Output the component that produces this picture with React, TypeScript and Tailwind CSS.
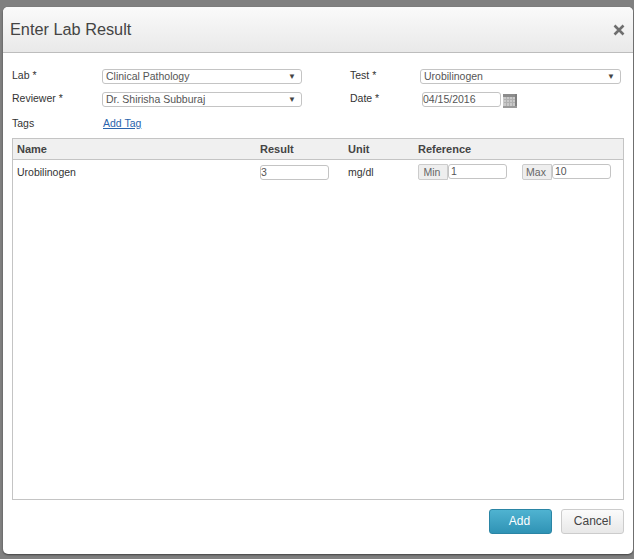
function SelectBox({ value, width }: { value: string; width: string }) {
  return (
    <div className={`flex h-[15px] items-center justify-between rounded-[3px] border border-[#c4c4c4] bg-white pl-[3px] pr-[5px] text-[10.5px] text-[#555] ${width}`}>
      <span>{value}</span>
      <span className="text-[8px] leading-none text-[#444]">▼</span>
    </div>
  );
}

function TextBox({ value, width }: { value: string; width: string }) {
  return (
    <div className={`flex h-[15px] items-center rounded-[3px] border border-[#c4c4c4] bg-white text-[10.5px] text-[#555] ${width}`}>
      {value}
    </div>
  );
}

function RangeInput({ label, value }: { label: string; value: string }) {
  return (
    <div className="flex">
      <div className="flex h-[16px] w-[30px] items-center justify-center rounded-l-[2px] border border-[#ccc] bg-[#eee] pr-[2px] pt-[1px] text-[10.5px] text-[#666]">
        {label}
      </div>
      <TextBox value={value} width="w-[59px] pl-[2px]" />
    </div>
  );
}

function CalendarIcon() {
  return (
    <svg width="14" height="14" viewBox="0 0 14 14" className="ml-[2px] mt-[2px]">
      <rect x="0" y="0" width="14" height="14" fill="#c9c9c9" />
      <rect x="0" y="0" width="14" height="3" fill="#8c8c8c" />
      <rect x="12" y="0" width="2" height="14" fill="#7f7f7f" />
      <rect x="0" y="12" width="14" height="2" fill="#9a9a9a" />
      <path d="M1 5.5h11M1 8.5h11M3.5 3v9M6.5 3v9M9.5 3v9" stroke="#b0b0b0" strokeWidth="1" />
    </svg>
  );
}

export default function App() {
  return (
    <div className="h-[559px] w-[634px] overflow-hidden bg-[#808080] pl-[3px] pt-[7px] font-['Liberation_Sans',Arial,sans-serif]">
      <div className="flex h-[547px] w-[630px] flex-col rounded-[5px] bg-white shadow-[0_1px_2px_rgba(0,0,0,0.5)]">
        <div className="flex h-[46px] shrink-0 items-center justify-between rounded-t-[5px] border-b border-[#bdbdbd] bg-gradient-to-b from-[#fafafa] to-[#e9e9e9] pl-[7px] pr-[8px]">
          <h1 className="text-[16.3px] text-[#444]">Enter Lab Result</h1>
          <svg width="12" height="12" viewBox="0 0 12 12" className="mt-[1px]">
            <path d="M1.5 1.5l9 9M10.5 1.5l-9 9" stroke="#6e6e6e" strokeWidth="2.6" />
          </svg>
        </div>

        <div className="flex flex-1 flex-col px-[9px] pt-[16px] text-[10.5px] text-[#333]">
          <div className="flex items-start">
            <span className="w-[90px] leading-[12px]">Lab *</span>
            <SelectBox value="Clinical Pathology" width="w-[200px]" />
            <span className="ml-[48px] w-[70px] leading-[12px]">Test *</span>
            <SelectBox value="Urobilinogen" width="w-[201px]" />
          </div>
          <div className="mt-[8px] flex items-start">
            <span className="w-[90px] leading-[12px]">Reviewer *</span>
            <SelectBox value="Dr. Shirisha Subburaj" width="w-[200px]" />
            <span className="ml-[48px] w-[72px] leading-[12px]">Date *</span>
            <TextBox value="04/15/2016" width="w-[79px]" />
            <CalendarIcon />
          </div>
          <div className="mt-[8px] flex items-center leading-[14px]">
            <span className="w-[91px]">Tags</span>
            <a className="text-[#2a64ad] underline">Add Tag</a>
          </div>

          <div className="mt-[8px] flex h-[362px] flex-col border border-[#c4c4c4]">
            <div className="flex h-[21px] shrink-0 items-center border-b border-[#c4c4c4] bg-[#f0f0f0] pl-[4px] pt-[1px] text-[11px] font-bold text-[#444]">
              <span className="w-[243px]">Name</span>
              <span className="w-[88px]">Result</span>
              <span className="w-[70px]">Unit</span>
              <span>Reference</span>
            </div>
            <div className="flex items-center pl-[4px] pt-[4px]">
              <span className="w-[243px] pt-[1px]">Urobilinogen</span>
              <div className="w-[88px]">
                <TextBox value="3" width="w-[69px]" />
              </div>
              <span className="w-[70px] pt-[1px]">mg/dl</span>
              <RangeInput label="Min" value="1" />
              <div className="ml-[15px]">
                <RangeInput label="Max" value="10" />
              </div>
            </div>
          </div>

          <div className="mt-[9px] flex justify-end gap-[9px]">
            <button className="h-[25px] w-[63px] rounded-[3px] border border-[#2a85a5] bg-gradient-to-b from-[#4fb3d1] to-[#2f93b5] pb-[1px] pr-[2px] text-[12px] text-white">
              Add
            </button>
            <button className="h-[25px] w-[63px] rounded-[3px] border border-[#ccc] bg-gradient-to-b from-[#fbfbfb] to-[#e8e8e8] pb-[1px] text-[12px] text-[#444]">
              Cancel
            </button>
          </div>
        </div>
      </div>
    </div>
  );
}
